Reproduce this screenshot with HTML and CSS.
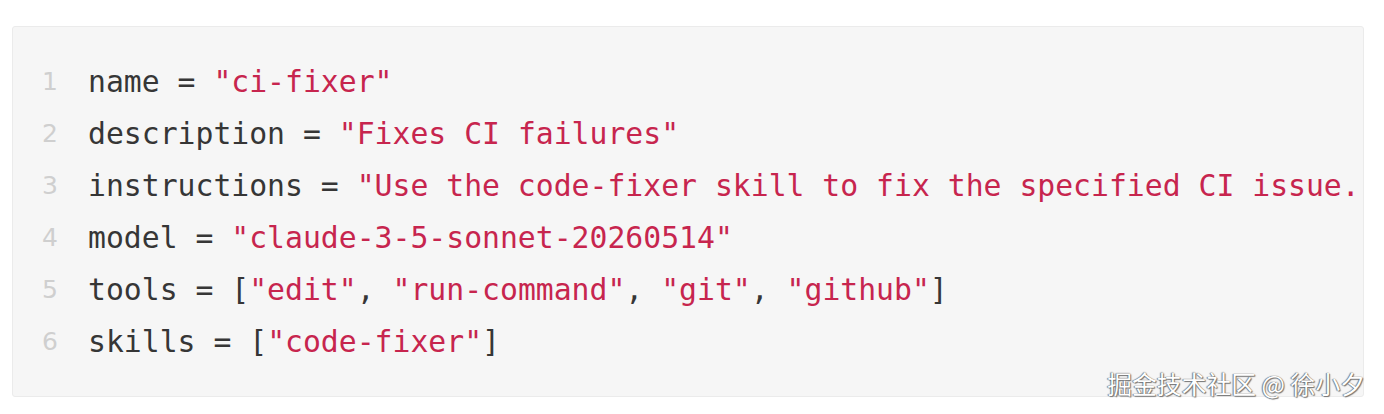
FILE: index.html
```html
<!DOCTYPE html>
<html lang="zh">
<head>
<meta charset="utf-8">
<title>ci-fixer</title>
<link rel="stylesheet" href="styles.css">
</head>
<body>
<div class="page">
  <div class="code-block">
    <ol class="lines">
      <li class="line"><span class="ln">1</span><span class="code">name = <span class="str">"ci-fixer"</span></span></li>
      <li class="line"><span class="ln">2</span><span class="code">description = <span class="str">"Fixes CI failures"</span></span></li>
      <li class="line"><span class="ln">3</span><span class="code">instructions = <span class="str">"Use the code-fixer skill to fix the specified CI issue."</span></span></li>
      <li class="line"><span class="ln">4</span><span class="code">model = <span class="str">"claude-3-5-sonnet-20260514"</span></span></li>
      <li class="line"><span class="ln">5</span><span class="code">tools = [<span class="str">"edit"</span>, <span class="str">"run-command"</span>, <span class="str">"git"</span>, <span class="str">"github"</span>]</span></li>
      <li class="line"><span class="ln">6</span><span class="code">skills = [<span class="str">"code-fixer"</span>]</span></li>
    </ol>
  </div>
  <div class="watermark">掘金技术社区 @ 徐小夕</div>
</div>
</body>
</html>
```
FILE: styles.css
```css
html, body {
  margin: 0;
  padding: 0;
  background: #ffffff;
}
.page {
  position: relative;
  width: 1384px;
  height: 414px;
  padding: 26px 20px 0 12px;
  box-sizing: border-box;
}
.code-block {
  background: #f6f6f6;
  border: 1px solid #ebebeb;
  border-radius: 3px;
  height: 371px;
  box-sizing: border-box;
  overflow: hidden;
  padding: 28px 0 0 0;
}
.lines {
  list-style: none;
  margin: 0;
  padding: 0;
}
.line {
  display: flex;
  align-items: center;
  height: 52px;
  white-space: pre;
}
.ln {
  width: 45px;
  text-align: right;
  flex: none;
  font-family: "DejaVu Sans", "Liberation Sans", sans-serif;
  font-size: 25px;
  color: #cfcfcf;
  margin-right: 30px;
}
.code {
  font-family: "DejaVu Sans Mono", "Liberation Mono", monospace;
  font-size: 29.75px;
  color: #363636;
}
.str {
  color: #c7254e;
}
.watermark {
  position: absolute;
  right: 19px;
  bottom: 15px;
  font-family: "Noto Sans CJK SC", "Noto Sans", sans-serif;
  font-size: 24.8px;
  line-height: 32px;
  color: #ffffff;
  text-shadow: 0 0 1px #555, 1px 1px 1px #777, -1px 0 1px #888;
  white-space: nowrap;
}
```
